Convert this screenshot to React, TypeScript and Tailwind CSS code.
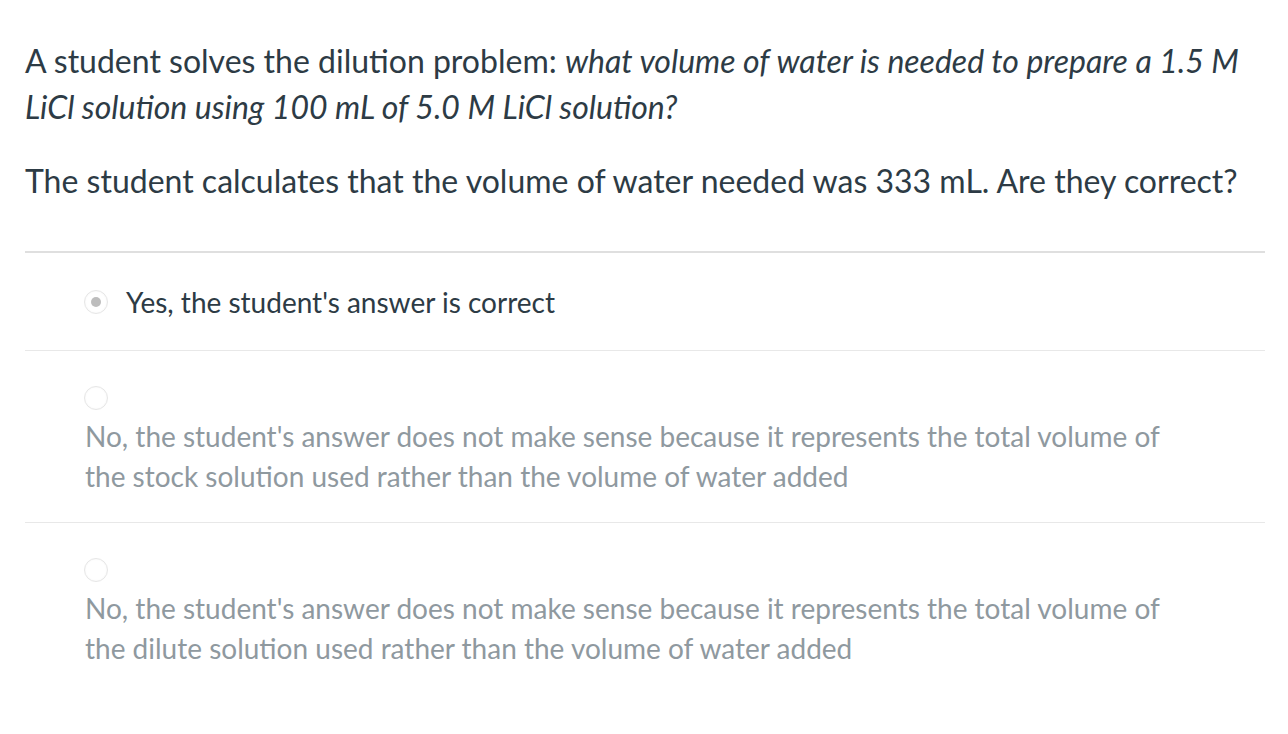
const answers = [
  { text: "Yes, the student's answer is correct", selected: true, inline: true },
  {
    text: "No, the student's answer does not make sense because it represents the total volume of the stock solution used rather than the volume of water added",
    selected: false,
    inline: false,
  },
  {
    text: "No, the student's answer does not make sense because it represents the total volume of the dilute solution used rather than the volume of water added",
    selected: false,
    inline: false,
  },
];

function Radio({ selected }: { selected: boolean }) {
  return (
    <span className="inline-flex h-[24px] w-[24px] shrink-0 items-center justify-center rounded-full border border-[#e6e6e6] bg-white shadow-[inset_0_0_2px_rgba(0,0,0,0.06)]">
      {selected ? <span className="h-[10px] w-[10px] rounded-full bg-[#bdbdbd]" /> : null}
    </span>
  );
}

export default function App() {
  return (
    <div className="min-h-screen bg-white font-['Lato','Noto_Sans',sans-serif] text-[#2d3b45]">
      <div className="pl-[25px] pr-[23px] pt-[38px]">
        <p className="text-[32px] leading-[46px]">
          A student solves the dilution problem:{" "}
          <em>what volume of water is needed to prepare a 1.5 M LiCl solution using 100 mL of 5.0 M LiCl solution?</em>
        </p>
        <p className="mt-[28px] text-[32px] leading-[46px]">
          The student calculates that the volume of water needed was 333 mL. Are they correct?
        </p>

        <div className="mt-[47px] border-t-2 border-[#dfdfdf]">
          {answers.map((a, i) => (
            <div key={i} className={i > 0 ? "border-t border-[#e8e8e8]" : ""}>
              {a.inline ? (
                <div className="flex h-[97px] items-center gap-[18px] pl-[59px]">
                  <Radio selected={a.selected} />
                  <span className="text-[28px]">{a.text}</span>
                </div>
              ) : (
                <div className="pb-[26px] pt-[35px]">
                  <div className="pl-[59px]">
                    <Radio selected={a.selected} />
                  </div>
                  <p className="max-w-[1140px] pl-[60px] text-[28px] leading-[40px] text-[#8f999f]">
                    {a.text}
                  </p>
                </div>
              )}
            </div>
          ))}
        </div>
      </div>
    </div>
  );
}
